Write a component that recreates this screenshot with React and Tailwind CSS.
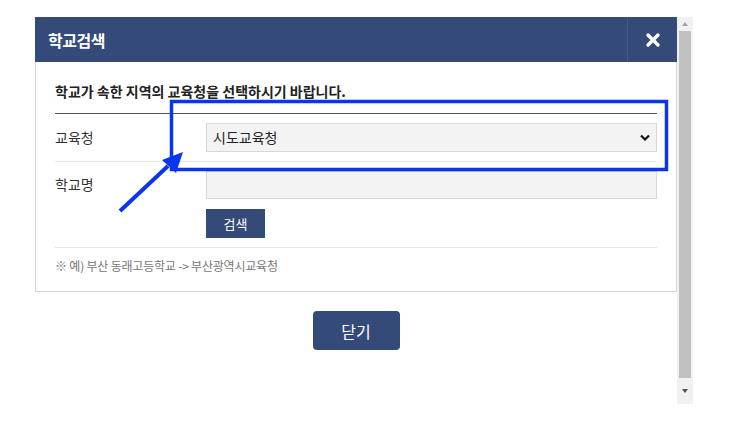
import { X } from "lucide-react";

function Annotation() {
  return (
    <svg
      className="absolute left-0 top-0 pointer-events-none"
      width="737"
      height="430"
      viewBox="0 0 737 430"
    >
      <rect x="171.5" y="101.5" width="495" height="68" fill="none" stroke="#0a35f0" strokeWidth="3.5" />
      <line x1="120" y1="211" x2="168" y2="166" stroke="#0a35f0" strokeWidth="4" />
      <polygon points="183,152 162,160 176,173" fill="#0a35f0" />
    </svg>
  );
}

function Scrollbar() {
  return (
    <div className="w-[16px] h-[387px] bg-[#f1f1f1] flex flex-col items-center">
      <div className="h-[14px] flex items-center justify-center">
        <div className="w-0 h-0 border-l-[3px] border-r-[3px] border-b-[4px] border-l-transparent border-r-transparent border-b-[#a3a3a3]" />
      </div>
      <div className="w-[12px] h-[347px] bg-[#c1c1c1]" />
      <div className="flex-1 flex items-center justify-center">
        <div className="w-0 h-0 border-l-[3px] border-r-[3px] border-t-[4px] border-l-transparent border-r-transparent border-t-[#505050]" />
      </div>
    </div>
  );
}

export default function App() {
  return (
    <div
      className="relative w-[737px] h-[430px] bg-white overflow-hidden"
      style={{ fontFamily: '"Noto Sans CJK KR", "Noto Sans", sans-serif' }}
    >
      <div className="flex pt-[17px] pl-[35px]">
        <div className="w-[642px]">
          {/* header */}
          <div className="h-[45px] bg-[#344a78] flex items-center justify-between">
            <h1 className="pl-[13px] text-white text-[16px] font-bold tracking-[-0.5px]">학교검색</h1>
            <div className="h-full w-[50px] border-l border-[#46598a] flex items-center justify-center">
              <X className="w-[20px] h-[20px] text-white" strokeWidth={4} />
            </div>
          </div>

          {/* body */}
          <div className="border border-t-0 border-[#d6d6d6] px-[19px] pt-[19px] pb-[16px] h-[230px]">
            <p className="text-[14px] font-bold text-[#222] tracking-[0px] leading-[20px] pb-[12px] border-b border-[#555]">
              학교가 속한 지역의 교육청을 선택하시기 바랍니다.
            </p>

            <div className="flex items-center py-[9px] border-b border-[#e6e6e6]">
              <span className="w-[151px] text-[14px] text-[#333]">교육청</span>
              <div className="flex-1 h-[29px] bg-[#f3f3f3] border border-[#d8d8d8] flex items-center justify-between pl-[6px] pr-[6px]">
                <span className="text-[14px] text-[#222]">시도교육청</span>
                <svg width="10" height="7" viewBox="0 0 10 7">
                  <path d="M1 1.5 L5 5.5 L9 1.5" fill="none" stroke="#111" strokeWidth="2.2" />
                </svg>
              </div>
            </div>

            <div className="flex pt-[9px] pb-[9px] border-b border-[#e6e6e6]">
              <span className="w-[151px] text-[14px] text-[#333] pt-[3px]">학교명</span>
              <div className="flex-1 flex flex-col gap-[10px]">
                <div className="h-[28px] bg-[#f3f3f3] border border-[#d8d8d8]" />
                <button className="w-[59px] h-[29px] bg-[#344a78] text-white text-[13px]">검색</button>
              </div>
            </div>

            <p className="pt-[9px] text-[12px] text-[#777] tracking-[-0.2px]">
              ※ 예) 부산 동래고등학교 -&gt; 부산광역시교육청
            </p>
          </div>

          <div className="flex justify-center pt-[19px]">
            <button className="w-[87px] h-[39px] rounded-[4px] bg-[#344a78] text-white text-[16px]">닫기</button>
          </div>
        </div>
        <Scrollbar />
      </div>
      <Annotation />
    </div>
  );
}
